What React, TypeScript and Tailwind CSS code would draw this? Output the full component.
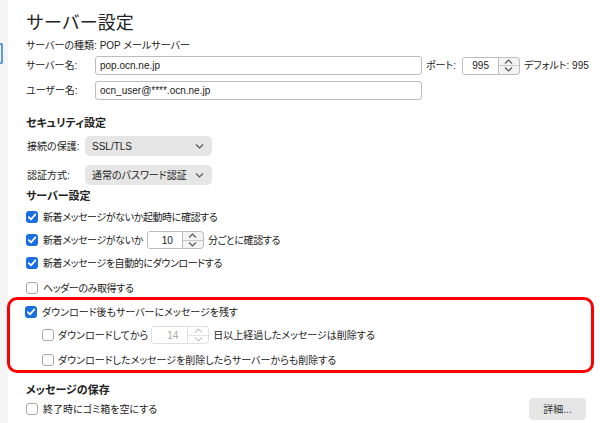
import clsx from "clsx";

function Check({ checked }: { checked?: boolean }) {
  return (
    <span
      className={clsx(
        "flex h-[12px] w-[12px] shrink-0 items-center justify-center rounded-[3px]",
        checked ? "bg-[#1b6ee0]" : "border border-[#a8a8a8] bg-white"
      )}
    >
      {checked && (
        <svg width="10" height="10" viewBox="0 0 10 10">
          <path d="M1.8 5.2 L4 7.4 L8.4 2.4" stroke="white" strokeWidth="1.7" fill="none" strokeLinecap="round" strokeLinejoin="round" />
        </svg>
      )}
    </span>
  );
}

function Chevron({ up, color }: { up?: boolean; color: string }) {
  return (
    <svg width="9" height="5" viewBox="0 0 9 5">
      <path d={up ? "M1 4.5 L4.5 1 L8 4.5" : "M1 0.5 L4.5 4 L8 0.5"} stroke={color} strokeWidth="1.1" fill="none" />
    </svg>
  );
}

function NumberField({ value, width, disabled }: { value: string; width: string; disabled?: boolean }) {
  return (
    <span className="flex h-[18px] items-stretch tracking-normal">
      <span
        className={clsx(
          "flex items-center justify-end rounded-l-[3px] border bg-white pr-[9px]",
          width,
          disabled ? "border-[#dedede] text-[#a8a8a8]" : "border-[#bdbdbd] text-[#222]"
        )}
      >
        {value}
      </span>
      <span
        className={clsx(
          "flex w-[21px] flex-col rounded-r-[4px] border border-l-0",
          disabled ? "border-[#e0e0e0] bg-white" : "border-[#bdbdbd] bg-[#f4f4f4]"
        )}
      >
        <span className={clsx("flex flex-1 items-center justify-center border-b", disabled ? "border-[#e4e4e4]" : "border-[#c8c8c8]")}>
          <Chevron up color={disabled ? "#c8c8c8" : "#555"} />
        </span>
        <span className="flex flex-1 items-center justify-center">
          <Chevron color={disabled ? "#c8c8c8" : "#555"} />
        </span>
      </span>
    </span>
  );
}

function Select({ value }: { value: string }) {
  return (
    <div className="flex h-[20px] w-[127px] items-center justify-between rounded-[5px] bg-[#e6e6e6] pl-[7px] pr-[8px] text-[#222]">
      <span>{value}</span>
      <Chevron color="#555" />
    </div>
  );
}

function CheckRow({ checked, children, className }: { checked?: boolean; children: React.ReactNode; className?: string }) {
  return (
    <div className={clsx("flex h-[18px] items-center", className)}>
      <Check checked={checked} />
      <div className="ml-[5px] flex items-center">{children}</div>
    </div>
  );
}

export default function App() {
  return (
    <div
      className="flex h-[423px] w-[600px] overflow-hidden bg-white text-[10px] text-[#222] [font-feature-settings:'palt']"
      style={{ fontFamily: '"Liberation Sans", "Noto Sans CJK JP", sans-serif' }}
    >
      {/* side list stub */}
      <aside className="w-[8px] shrink-0 bg-[#f5f5f5] pt-[43px]">
        <div className="h-[21px] w-[3px] rounded-r-[2px] border-2 border-l-0 border-[#5b9be6]" />
      </aside>

      <main className="flex flex-1 flex-col pl-[18px]">
        <h1 className="mt-[11px] flex h-[24px] items-center text-[18px] font-normal [font-feature-settings:normal]">サーバー設定</h1>
        <div className="mt-[2px] flex h-[16px] items-center">サーバーの種類: POP メールサーバー</div>

        <div className="mt-[3px] flex h-[19px] items-center">
          <span className="w-[69px] shrink-0">サーバー名:</span>
          <span className="flex h-[19px] w-[327px] items-center rounded-[3px] border border-[#bdbdbd] pl-[4px]">pop.ocn.ne.jp</span>
          <span className="ml-[4px]">ポート:</span>
          <span className="ml-[6px]">
            <NumberField value="995" width="w-[37px]" />
          </span>
          <span className="ml-[4px]">デフォルト: 995</span>
        </div>

        <div className="mt-[6px] flex h-[19px] items-center">
          <span className="w-[69px] shrink-0">ユーザー名:</span>
          <span className="flex h-[19px] w-[327px] items-center rounded-[3px] border border-[#bdbdbd] pl-[4px]">ocn_user@****.ocn.ne.jp</span>
        </div>

        <h2 className="mt-[15px] flex h-[16px] items-center text-[11px] font-bold">セキュリティ設定</h2>
        <div className="mt-[5px] flex h-[20px] items-center">
          <span className="w-[59px] shrink-0 pl-[1px]">接続の保護:</span>
          <Select value="SSL/TLS" />
        </div>
        <div className="mt-[9px] flex h-[20px] items-center">
          <span className="w-[59px] shrink-0 pl-[1px]">認証方式:</span>
          <Select value="通常のパスワード認証" />
        </div>

        <h2 className="mt-[3px] flex h-[16px] items-center text-[11px] font-bold">サーバー設定</h2>
        <div className="flex flex-col tracking-[-0.4px]">
          <CheckRow checked className="mt-[4px]">新着メッセージがないか起動時に確認する</CheckRow>
          <CheckRow checked className="mt-[5px]">
            新着メッセージがないか
            <span className="ml-[4px] mr-[4px]">
              <NumberField value="10" width="w-[36px]" />
            </span>
            分ごとに確認する
          </CheckRow>
          <CheckRow checked className="mt-[5px]">新着メッセージを自動的にダウンロードする</CheckRow>
          <CheckRow className="mt-[7px]">ヘッダーのみ取得する</CheckRow>
        </div>

        {/* highlighted group */}
        <div className="-ml-[19px] w-[587px] rounded-[10px] border-[3px] border-[#ff0000] pb-[1px] pl-[15px]">
          <CheckRow checked className="mt-[3px]">ダウンロード後もサーバーにメッセージを残す</CheckRow>
          <div className="ml-[17px] mt-[5px] flex h-[18px] items-center">
            <Check />
            <span className="ml-[4px]">ダウンロードしてから</span>
            <span className="ml-[3px] mr-[4px]">
              <NumberField value="14" width="w-[37px]" disabled />
            </span>
            <span>日以上経過したメッセージは削除する</span>
          </div>
          <div className="ml-[17px] mt-[7px] flex h-[18px] items-center">
            <Check />
            <span className="ml-[4px]">ダウンロードしたメッセージを削除したらサーバーからも削除する</span>
          </div>
        </div>

        <h2 className="mt-[9px] flex h-[16px] items-center text-[11px] font-bold">メッセージの保存</h2>
        <div className="flex h-[22px] items-center justify-between pr-[14px]">
          <CheckRow>終了時にゴミ箱を空にする</CheckRow>
          <button className="flex h-[22px] w-[57px] items-center justify-center rounded-[4px] bg-[#e6e6e6] text-[#333]">
            詳細...
          </button>
        </div>
      </main>
    </div>
  );
}
